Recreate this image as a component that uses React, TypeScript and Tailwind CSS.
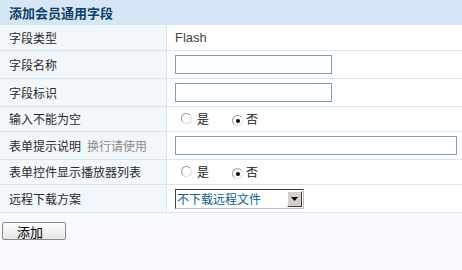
import React from "react";

const font = { fontFamily: '"Noto Sans CJK SC", "Liberation Sans", sans-serif' };

function Radio({ checked }: { checked?: boolean }) {
  return (
    <span className="inline-flex w-[11px] h-[11px] rounded-full border border-[#9a9a9a] border-r-[#e0e0e0] border-b-[#e0e0e0] bg-white items-center justify-center">
      {checked && <span className="w-[4px] h-[4px] rounded-full bg-black" />}
    </span>
  );
}

function Row({ label, extra, h, children }: { label: string; extra?: string; h: string; children: React.ReactNode }) {
  return (
    <div className={`flex border-b border-[#d9e6f2] ${h}`}>
      <div className="w-[167px] shrink-0 bg-[#f2f7fc] border-r border-[#d9e6f2] flex items-center pl-[9px] text-[#2a2a2a]">
        {label}
        {extra && <span className="ml-[6px] text-[#8a8a8a]">{extra}</span>}
      </div>
      <div className="flex-1 bg-white flex items-center pl-[8px]">{children}</div>
    </div>
  );
}

function YesNo() {
  return (
    <div className="flex items-center text-[#222]">
      <span className="ml-[6px]"><Radio /></span>
      <span className="ml-[5px]">是</span>
      <span className="ml-[23px]"><Radio checked /></span>
      <span className="ml-[3px]">否</span>
    </div>
  );
}

export default function App() {
  return (
    <div className="w-[462px] h-[270px] bg-[#f8f9fd] text-[12px] leading-none" style={font}>
      <div className="h-[25px] bg-[#d5e6f6] flex items-center pl-[9px] font-bold text-[13px] text-[#0d3e6c]">添加会员通用字段</div>
      <Row label="字段类型" h="h-[26px]">
        <span className="text-[#444] text-[13px]" style={{ fontFamily: '"Liberation Sans", sans-serif' }}>Flash</span>
      </Row>
      <Row label="字段名称" h="h-[28px]">
        <div className="w-[157px] h-[19px] border border-[#7f9db9] bg-white" />
      </Row>
      <Row label="字段标识" h="h-[28px]">
        <div className="w-[157px] h-[19px] border border-[#7f9db9] bg-white" />
      </Row>
      <Row label="输入不能为空" h="h-[25px]">
        <YesNo />
      </Row>
      <Row label="表单提示说明" extra="换行请使用" h="h-[28px]">
        <div className="w-[282px] h-[19px] border border-[#7f9db9] bg-white" />
      </Row>
      <Row label="表单控件显示播放器列表" h="h-[25px]">
        <YesNo />
      </Row>
      <Row label="远程下载方案" h="h-[28px]">
        <div className="w-[129px] h-[20px] border border-[#404040] border-r-[#c0c0c0] border-b-[#c0c0c0] bg-white flex items-center">
          <span className="flex-1 pl-[1px] text-[#0b5f8c] text-[12px]">不下载远程文件</span>
          <span className="w-[15px] h-[16px] mr-[1px] bg-[#d4d0c8] border border-[#ffffff] border-r-[#404040] border-b-[#404040] flex items-center justify-center">
            <svg width="7" height="4" viewBox="0 0 7 4"><path d="M0 0h7L3.5 4z" fill="#000" /></svg>
          </span>
        </div>
      </Row>
      <div className="pt-[9px] pl-[2px]">
        <button className="w-[64px] h-[18px] rounded-[2px] border border-[#8a8a8a] bg-gradient-to-b from-white to-[#e6e6e6] text-[13px] text-black flex items-center justify-center pr-[8px]" style={font}>
          添加
        </button>
      </div>
    </div>
  );
}
